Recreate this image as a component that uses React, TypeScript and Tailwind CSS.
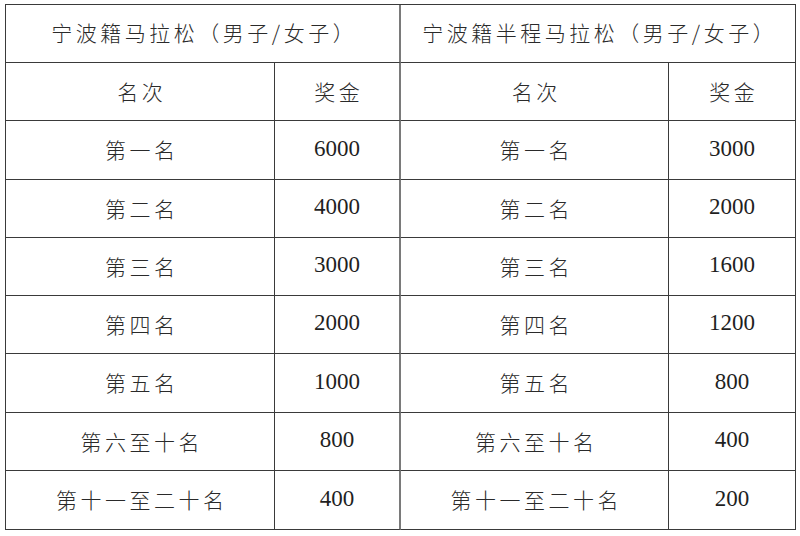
// Prize table: Ningbo marathon / half marathon (men/women)

const FULL = ['6000', '4000', '3000', '2000', '1000', '800', '400']
const HALF = ['3000', '2000', '1600', '1200', '800', '400', '200']
const PLACES = ['第一名', '第二名', '第三名', '第四名', '第五名', '第六至十名', '第十一至二十名']

const cjk = "[font-family:'Noto_Sans_CJK_SC',sans-serif] text-[21px] tracking-[3.5px] pl-[3.5px] font-light text-[#2a2a2a]"
const num = "[font-family:'Liberation_Serif',serif] text-[23px] text-[#1f1f1f] pb-[2px]"

function Cell({ children, className = '', mid = false, font = cjk }: { children: React.ReactNode; className?: string; mid?: boolean; font?: string }) {
  return (
    <div
      className={[
        'flex items-center justify-center border-b border-[#3a3a3a]',
        mid ? 'border-r-2 border-r-[#7a7a7a]' : 'border-r',
        font,
        className,
      ].join(' ')}
    >
      {children}
    </div>
  )
}

export default function App() {
  return (
    <div className="w-[800px] h-[536px] bg-white pt-[4px] pl-[5px]">
      <div className="grid w-[791px] grid-cols-[269px_126px_268px_127px] grid-rows-[58px_58px_59px_58px_58px_58px_59px_58px_59px] border-t border-l border-[#3a3a3a]">
        <Cell className="col-span-2 pb-[2px]" mid>宁波籍马拉松（男子/女子）</Cell>
        <Cell className="col-span-2 pb-[2px]">宁波籍半程马拉松（男子/女子）</Cell>

        <Cell>名次</Cell>
        <Cell mid>奖金</Cell>
        <Cell>名次</Cell>
        <Cell>奖金</Cell>

        {PLACES.map((p, i) => (
          <div key={p} className="contents">
            <Cell>{p}</Cell>
            <Cell mid font={num}>{FULL[i]}</Cell>
            <Cell>{p}</Cell>
            <Cell font={num}>{HALF[i]}</Cell>
          </div>
        ))}
      </div>
    </div>
  )
}
